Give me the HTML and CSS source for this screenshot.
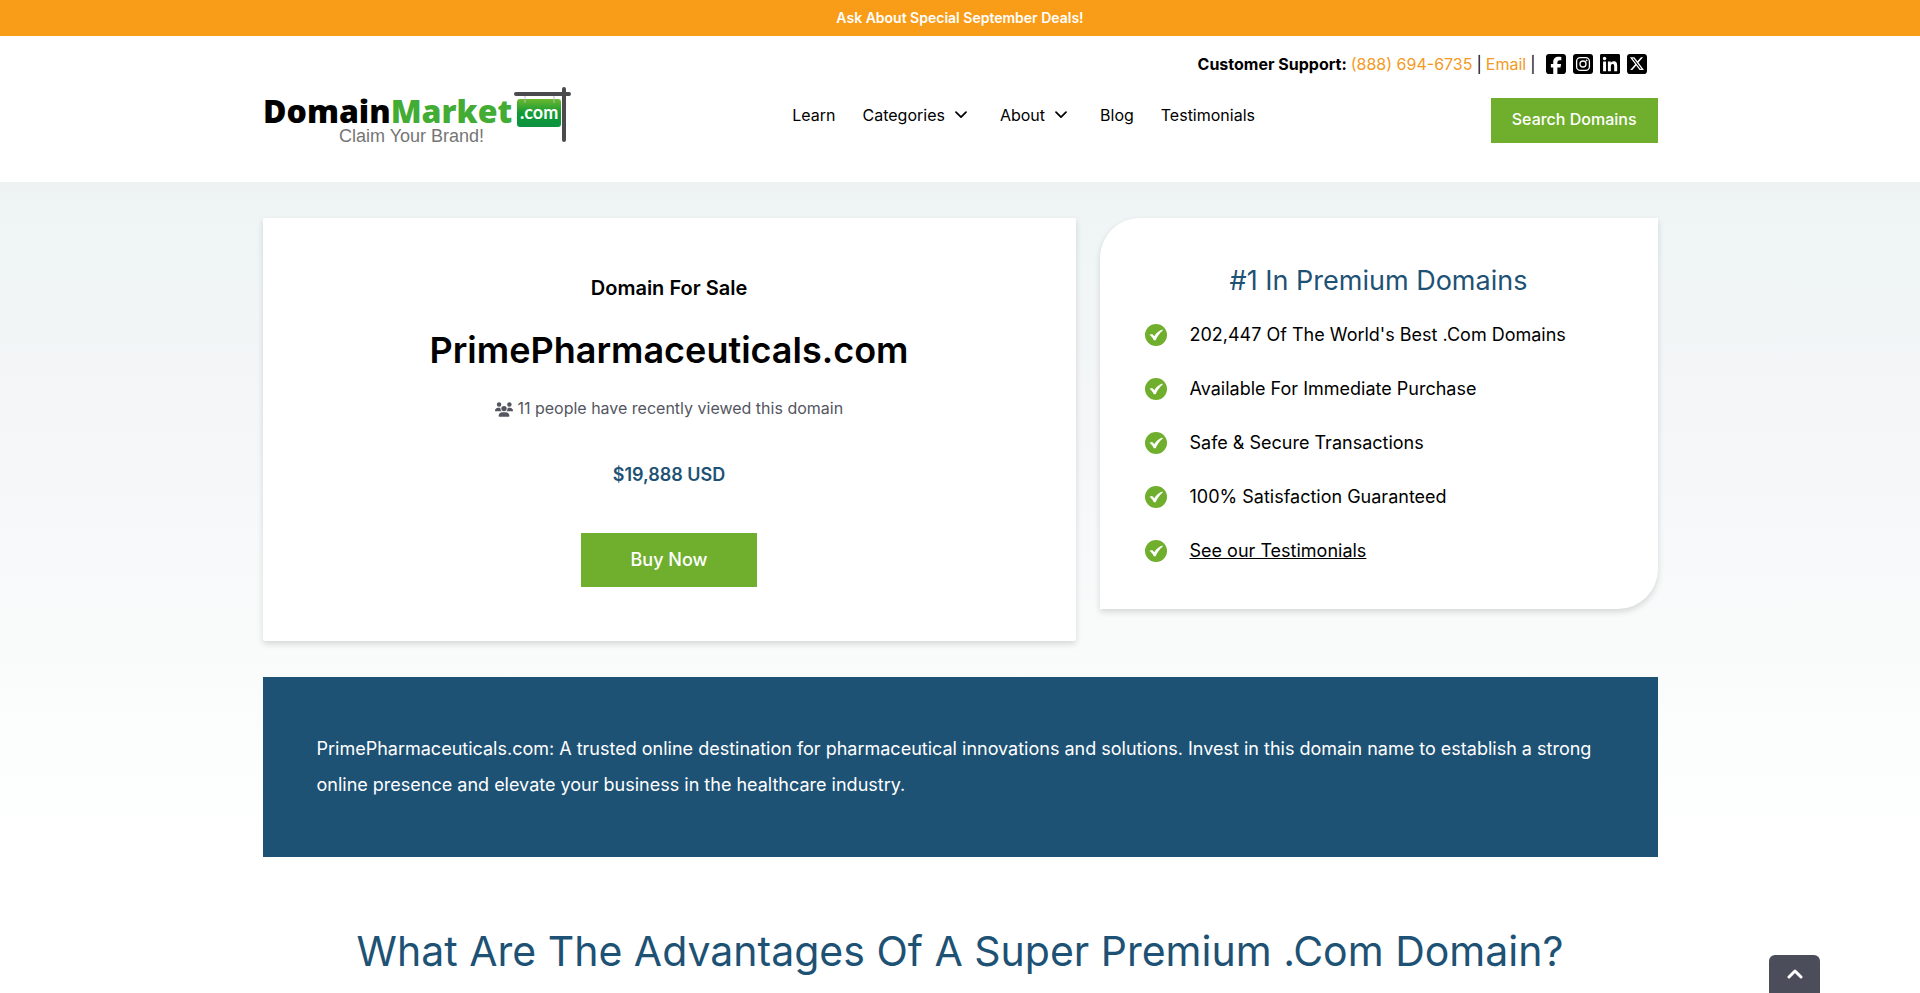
FILE: index.html
```html
<!DOCTYPE html>
<html lang="en">
<head>
<meta charset="utf-8">
<title>PrimePharmaceuticals.com | DomainMarket</title>
<link rel="stylesheet" href="styles.css">
</head>
<body>
<svg class="sprite" aria-hidden="true">
  <symbol id="check" viewBox="0 0 22 22"><circle cx="11" cy="11" r="11" fill="#70af2e"/><path d="M4.500 10.800L7 9.900c1 .6 1.700 1.300 2.300 2.300C11.200 9.200 13.600 7 17.200 5.600l.6.800C14.600 9 12.300 12.200 10.600 16.300H8.800C7.800 14 6.500 12.200 4.500 10.800z" fill="#fff"/></symbol>
  <symbol id="chevron" viewBox="0 0 12 8"><path d="M1 1.200l5 5 5-5" fill="none" stroke="currentColor" stroke-width="1.700" stroke-linecap="round" stroke-linejoin="round"/></symbol>
</svg>

<div class="promo">Ask About Special September Deals!</div>

<header class="header">
  <div class="container">
    <div class="support">
      <strong>Customer Support:</strong>
      <a href="tel:8886946735">(888) 694-6735</a>
      <span>|</span>
      <a href="mailto:info@example.com">Email</a>
      <span>|</span>
      <div class="social">
        <a href="#" aria-label="Facebook"><svg viewBox="0 0 448 448"><path d="M64 0C28.700 0 0 28.700 0 64v320c0 35.300 28.700 64 64 64h98.200V302.300h-52.800V224h52.800v-33.700c0-87.100 39.400-127.500 125-127.500 16.200 0 44.200 3.200 55.700 6.400V140c-6-.6-16.500-1-29.600-1-42 0-58.200 15.900-58.200 57.200V224h83.600l-14.400 78.300h-69.300V448H384c35.300 0 64-28.700 64-64V64c0-35.300-28.700-64-64-64H64z"/></svg></a>
        <a href="#" aria-label="Instagram"><svg viewBox="0 0 20 20"><rect width="20" height="20" rx="3"/><g fill="none" stroke="#fff" stroke-width="1.300"><rect x="3.600" y="3.600" width="12.800" height="12.800" rx="3.600"/><circle cx="10" cy="10" r="3"/></g><circle cx="13.600" cy="6.400" r=".9" fill="#fff"/></svg></a>
        <a href="#" aria-label="LinkedIn"><svg viewBox="0 0 448 448"><path d="M416 0H31.900C14.300 0 0 14.500 0 32.300v383.400C0 433.500 14.300 448 31.900 448H416c17.600 0 32-14.500 32-32.300V32.300C448 14.500 433.600 0 416 0zM135.400 384H69V170.200h66.500V384h-.1zM102.200 141c-21.300 0-38.500-17.300-38.500-38.500S80.900 64 102.200 64c21.200 0 38.500 17.300 38.500 38.500 0 21.300-17.200 38.500-38.500 38.500zM384.300 384h-66.400V280c0-24.800-.5-56.700-34.500-56.700-34.600 0-39.900 27-39.900 54.900V384h-66.400V170.200h63.700v29.200h.9c8.900-16.800 30.600-34.500 62.900-34.500 67.200 0 79.700 44.300 79.700 101.900V384z"/></svg></a>
        <a href="#" aria-label="X"><svg viewBox="0 0 448 448"><path d="M64 0C28.700 0 0 28.700 0 64v320c0 35.300 28.700 64 64 64h320c35.300 0 64-28.700 64-64V64c0-35.300-28.700-64-64-64H64zM361 72 255.400 192.700 379.600 357h-97.200L206.200 257.500 119.200 357H70.900l113-129.100L64.800 72h99.700l68.800 91 79.500-91H361zM323.300 328 150.400 99.400h-28.700L296.500 328h26.800z"/></svg></a>
      </div>
    </div>
    <div class="bar">
      <a class="logo" href="#" aria-label="DomainMarket.com">
        <svg viewBox="0 0 310 56">
          <defs><linearGradient id="sign" x1="0" y1="0" x2="0" y2="1"><stop offset="0" stop-color="#6cb82f"/><stop offset=".5" stop-color="#129a33"/><stop offset="1" stop-color="#0d9242"/></linearGradient></defs>
          <text class="logo-word" x="0" y="36">Domain<tspan class="logo-green">Market</tspan></text>
          <text class="logo-tag" x="76" y="55">Claim Your Brand!</text>
          <rect x="254" y="12" width="44" height="28" rx="3" fill="url(#sign)"/>
          <path d="M262 9v7M291 9v7" stroke="#bbb"/>
          <text class="logo-com" x="257" y="32">.com</text>
          <path d="M253 7h53M301 2v51" fill="none" stroke="#4b4b4d" stroke-width="4" stroke-linecap="round"/>
        </svg>
      </a>
      <nav class="nav">
        <a href="#">Learn</a>
        <a href="#">Categories <svg><use href="#chevron"/></svg></a>
        <a href="#">About <svg><use href="#chevron"/></svg></a>
        <a href="#">Blog</a>
        <a href="#">Testimonials</a>
      </nav>
      <button class="search" type="button">Search Domains</button>
    </div>
  </div>
</header>

<main class="main">
  <div class="container">
    <div class="cards">
      <section class="card sale">
        <h2>Domain For Sale</h2>
        <h1>PrimePharmaceuticals.com</h1>
        <p class="viewed"><svg viewBox="0 0 640 512"><path d="M144 0a80 80 0 1 1 0 160A80 80 0 1 1 144 0zM512 0a80 80 0 1 1 0 160A80 80 0 1 1 512 0zM0 298.700C0 239.800 47.800 192 106.700 192h42.700c15.900 0 31 3.500 44.600 9.700-1.300 7.200-1.900 14.700-1.900 22.300 0 38.200 16.800 72.500 43.300 96H21.300C9.600 320 0 310.400 0 298.700zM405.300 320h-.7c26.600-23.500 43.300-57.800 43.300-96 0-7.600-.7-15-1.900-22.300 13.600-6.300 28.700-9.700 44.600-9.700h42.700C592.200 192 640 239.800 640 298.700c0 11.800-9.600 21.300-21.300 21.300H405.300zM224 224a96 96 0 1 1 192 0 96 96 0 1 1-192 0zM128 485.300C128 411.700 187.700 352 261.300 352h117.400C452.300 352 512 411.700 512 485.300c0 14.700-11.900 26.700-26.700 26.700H154.700c-14.700 0-26.700-11.900-26.700-26.700z" fill="currentColor"/></svg> 11 people have recently viewed this domain</p>
        <p class="price">$19,888 USD</p>
        <button class="buy" type="button">Buy Now</button>
      </section>
      <section class="card perks">
        <h2>#1 In Premium Domains</h2>
        <ul>
          <li><svg><use href="#check"/></svg>202,447 Of The World's Best .Com Domains</li>
          <li><svg><use href="#check"/></svg>Available For Immediate Purchase</li>
          <li><svg><use href="#check"/></svg>Safe &amp; Secure Transactions</li>
          <li><svg><use href="#check"/></svg>100% Satisfaction Guaranteed</li>
          <li><svg><use href="#check"/></svg><a href="#">See our Testimonials</a></li>
        </ul>
      </section>
    </div>
    <p class="about">PrimePharmaceuticals.com: A trusted online destination for pharmaceutical innovations and solutions. Invest in this domain name to establish a strong online presence and elevate your business in the healthcare industry.</p>
    <h2 class="advantages">What Are The Advantages Of A Super Premium .Com Domain?</h2>
  </div>
</main>

<button class="to-top" type="button" aria-label="Back to top"><svg viewBox="0 0 16 10"><path d="M2 8l6-6 6 6" fill="none" stroke="#fff" stroke-width="3" stroke-linecap="round" stroke-linejoin="round"/></svg></button>
</body>
</html>
```
FILE: styles.css
```css
* { box-sizing: border-box; }
body {
  margin: 0;
  font: 400 16px/24px Inter, "Liberation Sans", sans-serif;
  color: #000;
  background: #fff;
}
h1, h2, p, ul { margin: 0; padding: 0; }
a { color: inherit; text-decoration: none; }
button { border: 0; border-radius: 0; font: inherit; color: #fff; cursor: pointer; }
.sprite { position: absolute; width: 0; height: 0; }
.container { max-width: 1419px; margin: 0 auto; padding: 0 12px; }

.promo {
  padding: 6px;
  background: #f99d18;
  color: #fff;
  font-size: 14px;
  font-weight: 600;
  text-align: center;
}

.header { padding: 16px 0 39px; background: #fff; }
.support { display: flex; justify-content: flex-end; align-items: center; gap: 4px; padding-right: 11px; }
.support > a { color: #f29a24; }
.social { display: flex; gap: 7px; margin-left: 6px; }
.social svg { display: block; width: 20px; height: 20px; }
.bar { display: flex; justify-content: space-between; align-items: center; margin-top: 11px; }
.logo svg { display: block; width: 310px; height: 56px; overflow: visible; }
.logo-word { font: 800 32px "Open Sans", sans-serif; }
.logo-green { fill: #43ac34; }
.logo-tag { font: 18px "Liberation Sans", sans-serif; fill: #757575; }
.logo-com { font: 700 18px Lato, sans-serif; fill: #fff; }
.nav { display: flex; gap: 27px; padding-right: 16px; }
.nav a { display: flex; align-items: center; }
.nav svg { width: 12px; height: 8px; margin: 0 6px 0 10px; }
.search { align-self: flex-end; padding: 9px 21px 12px; background: #70af2e; font-weight: 500; }

.main {
  padding-top: 36px;
  background: linear-gradient(#eef2f2, #eff5f5 40px, #f5f6f8 250px, #f9fbfb 460px, #fff 670px);
}
.cards { display: grid; grid-template-columns: 813fr 558fr; align-items: start; gap: 24px; }
.card { background: #fff; box-shadow: 0 3px 6px rgba(0, 0, 0, .14); }
.sale { display: flex; flex-direction: column; align-items: center; padding: 54px; border-radius: 2px; text-align: center; }
.sale h2 { font-size: 20px; font-weight: 600; line-height: 32px; }
.sale h1 { margin-top: 19px; font-size: 36px; font-weight: 600; line-height: 54px; }
.viewed { margin-top: 19px; color: #54565f; }
.viewed svg { width: 18px; height: 15px; vertical-align: -3px; }
.price { margin-top: 37px; color: #1e5275; font-size: 18px; font-weight: 600; line-height: 36px; }
.buy { margin-top: 40px; padding: 9px 50px; background: #70af2e; font-size: 18px; font-weight: 500; line-height: 36px; }
.perks { padding: 36px 45px 31px; border-radius: 40px 0; }
.perks h2 { color: #1e5275; font-size: 27px; font-weight: 400; line-height: 54px; text-align: center; }
.perks ul { list-style: none; font-size: 18px; line-height: 54px; }
.perks li { display: flex; align-items: center; gap: 23px; }
.perks svg { width: 22px; height: 22px; }
.perks a { text-decoration: underline; }
.about { margin-top: 36px; padding: 54px; background: #1e5275; color: #fff; font-size: 18px; line-height: 36px; }
.advantages { padding-top: 64px; color: #1e5275; font-size: 41px; font-weight: 400; line-height: 60px; text-align: center; }

.to-top {
  position: fixed;
  right: 100px;
  bottom: 0;
  display: flex;
  justify-content: center;
  width: 51px;
  height: 38px;
  padding-top: 14px;
  border-radius: 6px 6px 0 0;
  background: #4b4d5a;
}
.to-top svg { width: 16px; height: 10px; }
```
